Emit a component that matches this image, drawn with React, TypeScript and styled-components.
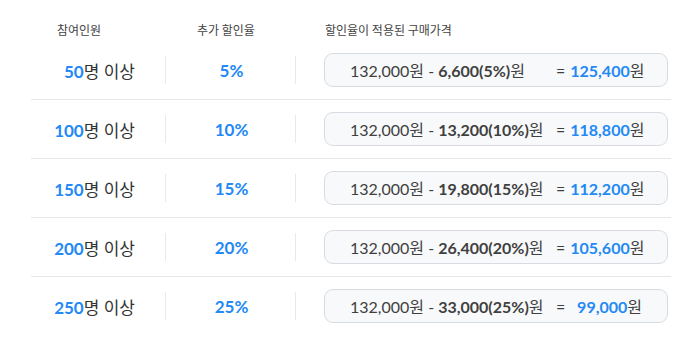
import React from 'react';
import styled, { createGlobalStyle } from 'styled-components';

interface Tier {
  people: number;
  rate: number;
  discount: string;
  result: string;
}

const BASE = '132,000';

const tiers: Tier[] = [
  { people: 50, rate: 5, discount: '6,600', result: '125,400' },
  { people: 100, rate: 10, discount: '13,200', result: '118,800' },
  { people: 150, rate: 15, discount: '19,800', result: '112,200' },
  { people: 200, rate: 20, discount: '26,400', result: '105,600' },
  { people: 250, rate: 25, discount: '33,000', result: '99,000' },
];

const GlobalStyle = createGlobalStyle`
  body {
    margin: 0;
    background: #ffffff;
    font-family: Lato, "Noto Sans CJK KR", sans-serif;
    color: #333333;
  }
`;

const App = () => {
  return (
    <>
      <GlobalStyle />
      <Table>
        <HeaderRow>
          <HeadCell $pad={26}>참여인원</HeadCell>
          <HeadCell $pad={32}>추가 할인율</HeadCell>
          <HeadCell $pad={29}>할인율이 적용된 구매가격</HeadCell>
        </HeaderRow>
        {tiers.map((t, i) => (
          <Row key={t.people} $last={i === tiers.length - 1}>
            <PeopleCell>
              <Blue>{t.people}</Blue>명 이상
            </PeopleCell>
            <RateCell>
              <Blue>{t.rate}%</Blue>
            </RateCell>
            <PriceCell>
              <PriceBox>
                <Formula>
                  {BASE}원 - <b>{t.discount}({t.rate}%)</b>원
                </Formula>
                <Equals>=</Equals>
                <Result>
                  <Blue>{t.result}</Blue>원
                </Result>
              </PriceBox>
            </PriceCell>
          </Row>
        ))}
      </Table>
    </>
  );
};

const Table = styled.div`
  width: 640px;
  margin-left: 31px;
`;

const HeaderRow = styled.div`
  display: grid;
  grid-template-columns: 134px 131px 1fr;
  height: 41px;
  align-items: end;
`;

const HeadCell = styled.div<{ $pad: number }>`
  padding-left: ${(p) => p.$pad}px;
  padding-bottom: 3px;
  font-size: 12px;
  color: #444;
  font-family: "Noto Sans CJK KR", sans-serif;
`;

const Row = styled.div<{ $last: boolean }>`
  display: grid;
  grid-template-columns: 134px 131px 1fr;
  align-items: center;
  padding: 12px 0;
  border-bottom: 1px solid ${(p) => (p.$last ? 'transparent' : '#e4e8ec')};
`;

const PeopleCell = styled.div`
  text-align: right;
  padding-right: 30px;
  font-size: 17px;
  color: #333;
`;

const Blue = styled.span`
  color: #2289f5;
  font-weight: 700;
`;

const RateCell = styled.div`
  height: 28px;
  display: flex;
  align-items: center;
  justify-content: center;
  padding-left: 2px;
  border-left: 1px solid #e6e9ed;
  border-right: 1px solid #e6e9ed;
  font-size: 17px;
`;

const PriceCell = styled.div`
  padding-left: 28px;
`;

const PriceBox = styled.div`
  box-sizing: border-box;
  width: 344px;
  height: 34px;
  display: grid;
  grid-template-columns: 206px auto 1fr;
  align-items: center;
  padding: 0 25px;
  background: #f8f9fb;
  border: 1px solid #d8dce2;
  border-radius: 9px;
  font-size: 16px;
  color: #404040;
  white-space: nowrap;

  b {
    font-weight: 700;
  }
`;

const Formula = styled.span``;

const Equals = styled.span`
  padding-right: 5px;
`;

const Result = styled.span`
  text-align: right;
`;

export default App;
